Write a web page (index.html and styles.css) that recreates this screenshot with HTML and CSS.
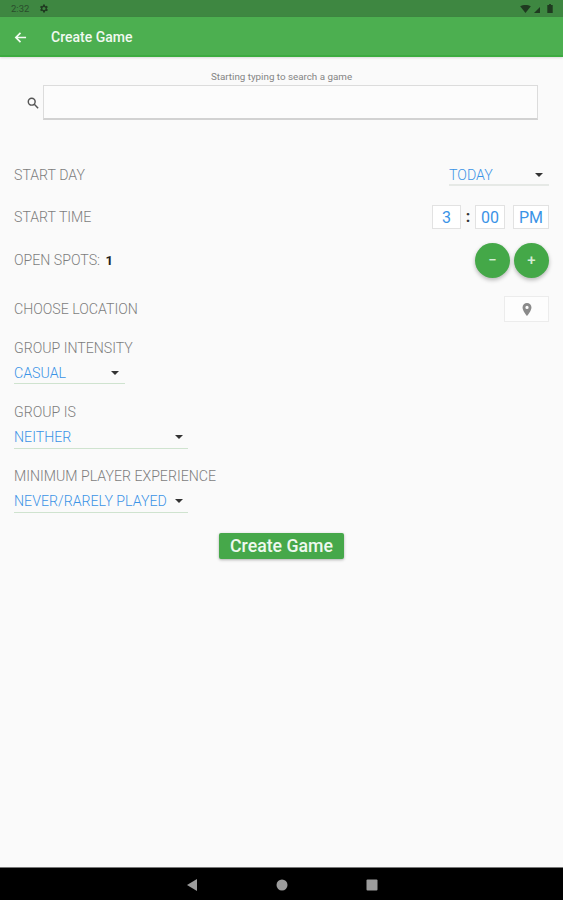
FILE: index.html
```html
<!DOCTYPE html>
<html lang="en">
<head>
<meta charset="utf-8">
<title>Create Game</title>
<link rel="stylesheet" href="styles.css">
</head>
<body>
<div class="screen">
  <header class="status">
    <div class="status-left">
      <span class="clock">2:32</span>
      <svg class="gear" viewBox="0 0 24 24" width="11" height="11"><path d="M19.4 13a7.5 7.5 0 0 0 0-2l2.100-1.600-2-3.500-2.500 1a7.600 7.600 0 0 0-1.700-1L15 3.200h-4l-.4 2.700a7.600 7.600 0 0 0-1.700 1l-2.500-1-2 3.500L6.600 11a7.500 7.500 0 0 0 0 2l-2.100 1.600 2 3.500 2.500-1a7.600 7.600 0 0 0 1.700 1l.4 2.700h4l.4-2.700a7.600 7.600 0 0 0 1.700-1l2.500 1 2-3.500zM13 15.500a3.500 3.500 0 1 1 0-7 3.500 3.500 0 0 1 0 7z"/></svg>
    </div>
    <div class="status-right">
      <svg class="wifi" viewBox="0 0 12 9" width="11" height="8"><path d="M0 1.500C3.500-.5 8.500-.5 12 1.500L6 9z"/></svg>
      <svg class="signal" viewBox="0 0 8 8" width="6" height="6"><path d="M8 0v8H0z"/></svg>
      <svg class="battery" viewBox="0 0 6 10" width="6" height="9"><path d="M2 0h2v1h2v9H0V1h2z"/></svg>
    </div>
  </header>
  <div class="appbar">
    <svg class="back" viewBox="0 0 14 14" width="13" height="13"><path d="M13 7H2M7 2 2 7l5 5"/></svg>
    <h1 class="title">Create Game</h1>
  </div>
  <main class="content">
    <p class="hint">Starting typing to search a game</p>
    <div class="search">
      <svg class="search-icon" viewBox="0 0 14 14" width="12" height="12"><circle cx="5.500" cy="5.500" r="4"/><path d="m8.500 8.500 4.500 4.500"/></svg>
      <div class="search-box"></div>
    </div>

    <div class="row row-day">
      <span class="label">START DAY</span>
      <div class="select select-day"><span>TODAY</span><i class="caret"></i></div>
    </div>
    <div class="row row-time">
      <span class="label">START TIME</span>
      <div class="time">
        <span class="time-box box-h">3</span>
        <span class="colon">:</span>
        <span class="time-box box-m">00</span>
        <span class="time-box box-p">PM</span>
      </div>
    </div>
    <div class="row row-spots">
      <span class="label">OPEN SPOTS: <b class="count">1</b></span>
      <div class="steppers">
        <span class="fab">−</span>
        <span class="fab">+</span>
      </div>
    </div>
    <div class="row row-loc">
      <span class="label">CHOOSE LOCATION</span>
      <div class="pin-box">
        <svg viewBox="0 0 12 16" width="10" height="13"><path fill-rule="evenodd" d="M6 0a5.500 5.500 0 0 0-5.500 5.500C.5 9.500 6 16 6 16s5.500-6.500 5.500-10.500A5.500 5.500 0 0 0 6 0zm0 7.500a2 2 0 1 1 0-4 2 2 0 0 1 0 4z"/></svg>
      </div>
    </div>

    <div class="field field-first">
      <div class="label">GROUP INTENSITY</div>
      <div class="select select-intensity"><span>CASUAL</span><i class="caret"></i></div>
    </div>
    <div class="field field-second">
      <div class="label">GROUP IS</div>
      <div class="select select-wide"><span>NEITHER</span><i class="caret"></i></div>
    </div>
    <div class="field">
      <div class="label">MINIMUM PLAYER EXPERIENCE</div>
      <div class="select select-wide"><span>NEVER/RARELY PLAYED</span><i class="caret"></i></div>
    </div>

    <div class="actions"><button class="create" type="button">Create Game</button></div>
  </main>
  <nav class="navbar">
    <svg viewBox="0 0 12 12" width="12" height="12"><path d="M11 0v12L1 6z"/></svg>
    <svg viewBox="0 0 12 12" width="12" height="12"><circle cx="6" cy="6" r="5.500"/></svg>
    <svg viewBox="0 0 12 12" width="12" height="12"><rect x="0.500" y="0.500" width="11" height="11" rx="1"/></svg>
  </nav>
</div>
</body>
</html>
```

FILE: styles.css
```css
* { box-sizing: border-box; }
html, body { margin: 0; padding: 0; }
body { font-family: Roboto, "Liberation Sans", sans-serif; background: #fafafa; }
.screen { width: 563px; height: 900px; display: flex; flex-direction: column; overflow: hidden; }

.status { height: 17px; background: #3e8741; display: flex; justify-content: space-between; align-items: center; padding: 0 10px 0 11px; }
.status-left, .status-right { display: flex; align-items: center; }
.status-left { gap: 9px; }
.status svg { fill: #1f3a20; display: block; }
.signal { margin-left: 3px; margin-top: 2px; }
.battery { margin-left: 7px; }
.clock { font-size: 9.500px; color: #2a4d2c; }

.appbar { height: 40px; background: #4caf50; border-bottom: 2px solid #3cab40; display: flex; align-items: center; padding: 2px 0 0 14px; box-shadow: 0 1px 2px rgba(0,0,0,.12); position: relative; }
.back { fill: none; stroke: #f4fbf4; stroke-width: 1.800; }
.title { margin: 0 0 0 24px; font-size: 14px; font-weight: 500; color: #f1f9f1; }

.content { flex: 1; padding: 14px 14px 0; min-height: 0; }
.hint { margin: 0; text-align: center; font-size: 9.800px; line-height: 11px; color: #858585; }
.search { display: flex; align-items: center; margin: 3px 11px 0 13px; gap: 4px; }
.search-icon { fill: none; stroke: #555; stroke-width: 1.700; flex: none; }
.search-box { flex: 1; height: 35px; background: #fcfcfc; border: 1px solid #dcdcdc; border-bottom: 2px solid #d2d2d2; }

.label { font-size: 14.150px; line-height: 18px; font-weight: 300; color: #7d7d7d; }
.count { font-weight: 700; color: #222; font-size: 13px; margin-left: 2px; }
.row { display: flex; justify-content: space-between; align-items: center; }
.row-day { margin-top: 37px; height: 36px; }
.row-time { margin-top: 6px; height: 36px; }
.row-spots { margin-top: 7px; height: 36px; }
.row-loc { margin-top: 18px; height: 26px; }

.select { display: flex; justify-content: space-between; align-items: center; height: 23px; margin-top: 5px; font-size: 14.200px; font-weight: 300; color: #3a93e6; border-bottom: 1px solid #cfe3cf; }
.select-day { width: 100px; border-bottom: 2px solid #e6e9e6; padding-right: 6px; height: 21px; margin-top: 1px; }
.select-intensity { width: 111px; padding-right: 6px; height: 21px; margin-top: 6px; }
.select-wide { width: 174px; padding-right: 5px; }
.caret { width: 0; height: 0; border: 4px solid transparent; border-top-color: #333; border-bottom: 0; flex: none; }

.time { display: flex; align-items: center; }
.time-box { display: flex; justify-content: center; align-items: center; height: 24px; background: #fff; border: 1px solid #e2e2e2; font-size: 16px; color: #3a93e6; }
.box-h { width: 29px; }
.box-m { width: 30px; }
.box-p { width: 36px; margin-left: 8px; }
.colon { width: 14px; text-align: center; font-size: 16px; font-weight: 700; color: #333; line-height: 20px; }

.steppers { display: flex; gap: 4px; }
.fab { width: 35px; height: 35px; border-radius: 50%; background: #44a848; color: #d5ecd5; display: flex; align-items: center; justify-content: center; font-size: 15px; font-weight: 500; box-shadow: 0 2px 4px rgba(0,0,0,.28); }

.pin-box { width: 45px; height: 26px; background: #fdfdfd; border: 1px solid #ececec; display: flex; align-items: center; justify-content: center; }
.pin-box svg { fill: #8a8a8a; }

.field { margin-top: 18px; }
.field-first { margin-top: 17px; }
.field-second { margin-top: 19px; }

.actions { display: flex; justify-content: center; margin-top: 20px; }
.create { width: 125px; height: 26px; padding: 0; border: 0; border-radius: 2px; background: #46a84a; color: #eef8ee; font: 500 17.700px Roboto, "Liberation Sans", sans-serif; box-shadow: 0 1px 3px rgba(0,0,0,.3); }

.navbar { height: 33px; background: #000; border-top: 1px solid #777; display: flex; justify-content: center; align-items: center; gap: 78px; padding-top: 1px; }
.navbar svg { fill: #9c9c9c; display: block; }
```
